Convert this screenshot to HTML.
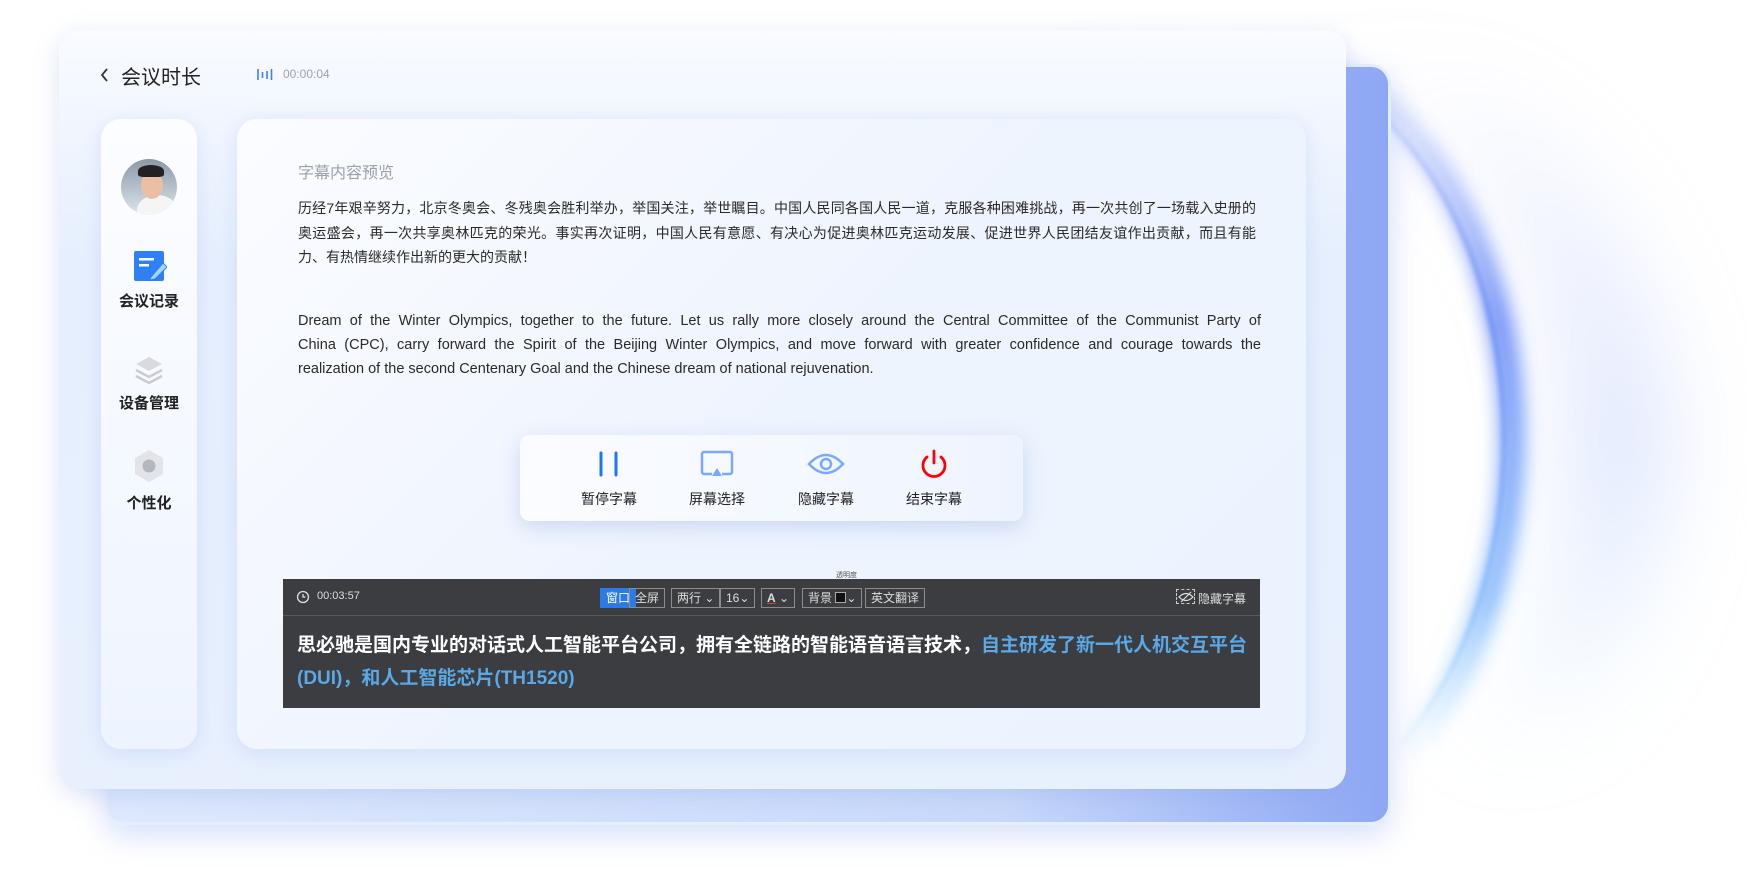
<!DOCTYPE html>
<html><head><meta charset="utf-8">
<style>
*{margin:0;padding:0;box-sizing:border-box}
body{width:1746px;height:873px;overflow:hidden;background:#fff;position:relative;font-family:"Liberation Sans","Noto Sans CJK SC",sans-serif;color:#222}
.abs{position:absolute}
#back{left:104px;top:64px;width:1287px;height:761px;border-radius:20px;background:linear-gradient(90deg,#dfe9fd 0%,#c9d9fb 70%,#8ea7f4 100%);border:3px solid #e4eeff;box-shadow:0 10px 30px rgba(120,150,240,.3)}
#main{left:59px;top:30px;width:1287px;height:759px;border-radius:20px;background:linear-gradient(180deg,#f9fbff 0%,#e6effe 30%,#e8f0fe 100%);box-shadow:0 6px 24px rgba(120,150,220,.25)}
#side{left:101px;top:119px;width:96px;height:630px;border-radius:20px;background:linear-gradient(180deg,#fcfdff,#eef4ff);box-shadow:0 4px 18px rgba(140,170,230,.25)}
#content{left:237px;top:119px;width:1069px;height:630px;border-radius:20px;background:linear-gradient(135deg,#fbfcff 0%,#eef4fe 50%,#ecf3fe 100%);box-shadow:0 4px 20px rgba(140,170,230,.25)}
.lbl{position:absolute;width:96px;text-align:center;font-size:15px;font-weight:bold;color:#222}
.jl{text-align:justify;text-align-last:justify;white-space:nowrap}
.cn{font-size:14px;color:#2a2a2a;height:24.5px;line-height:24.5px;width:958px}
.en{font-size:14.5px;color:#2a2a2a;height:24px;line-height:24px;width:963px}
#tool{left:520px;top:435px;width:503px;height:86px;border-radius:10px;background:linear-gradient(90deg,#fbfcff,#eef4ff);box-shadow:0 6px 20px rgba(120,150,220,.3)}
.ti{position:absolute;width:100px;text-align:center;font-size:14px;color:#222}
#sub{left:283px;top:579px;width:977px;height:129px;background:#3b3d40}
.tb{position:absolute;top:9px;height:20px;border:1px solid #8a8c90;color:#ddd;font-size:12px;line-height:18px;padding:0 5px}
</style></head><body>
<svg class="abs" style="left:0;top:0" width="1746" height="873">
<defs>
<filter id="b1" x="-50%" y="-50%" width="200%" height="200%"><feGaussianBlur stdDeviation="45"/></filter>
<filter id="b2" x="-50%" y="-50%" width="200%" height="200%"><feGaussianBlur stdDeviation="9"/></filter>
<filter id="b3" x="-50%" y="-50%" width="200%" height="200%"><feGaussianBlur stdDeviation="2.5"/></filter>
<linearGradient id="g" x1="0" y1="0" x2="0" y2="1"><stop offset="0" stop-color="#6e8ff5" stop-opacity="0"/><stop offset=".35" stop-color="#5f83f5"/><stop offset=".7" stop-color="#7fb6fb"/><stop offset=".9" stop-color="#8fd0fb" stop-opacity="0"/></linearGradient>
<linearGradient id="g2" x1="0" y1="0" x2="0" y2="1"><stop offset="0" stop-color="#b7c8fb" stop-opacity="0"/><stop offset=".5" stop-color="#c3d2fb"/><stop offset=".9" stop-color="#bfe3fd" stop-opacity="0"/></linearGradient>
</defs>
<ellipse cx="1290" cy="450" rx="330" ry="390" fill="none" stroke="url(#g2)" stroke-width="90" filter="url(#b1)" opacity=".6"/>
<ellipse cx="1232" cy="440" rx="280" ry="400" fill="none" stroke="url(#g)" stroke-width="26" filter="url(#b2)" opacity=".85"/>
<ellipse cx="1228" cy="440" rx="276" ry="390" fill="none" stroke="url(#g)" stroke-width="5" filter="url(#b3)" opacity=".7"/>
</svg>
<div id="back" class="abs"></div>
<div id="main" class="abs"></div>
<!-- header -->
<svg class="abs" style="left:99px;top:67px" width="12" height="16"><path d="M8 2 L3 8 L8 14" fill="none" stroke="#333" stroke-width="1.8"/></svg>
<div class="abs" style="left:121px;top:61px;font-size:20px;color:#222">会议时长</div>
<svg class="abs" style="left:257px;top:68px" width="18" height="13"><g stroke="#3d7ff5" stroke-width="1.6"><line x1="1" y1="1" x2="1" y2="12"/><line x1="5.5" y1="4" x2="5.5" y2="10"/><line x1="10" y1="3" x2="10" y2="11"/><line x1="14.5" y1="1" x2="14.5" y2="12"/></g></svg>
<div class="abs" style="left:283px;top:67px;font-size:12px;color:#9aa3b5">00:00:04</div>
<!-- sidebar -->
<div id="side" class="abs"></div>
<div class="abs" style="left:121px;top:159px;width:56px;height:56px;border-radius:50%;overflow:hidden;background:linear-gradient(180deg,#8a99a8,#dfe5ea)">
<div class="abs" style="left:16px;top:36px;width:40px;height:30px;border-radius:50%;background:#f5f5f5"></div>
<div class="abs" style="left:20px;top:12px;width:22px;height:28px;border-radius:50%;background:#eabfa3"></div>
<div class="abs" style="left:17px;top:6px;width:26px;height:12px;border-radius:50% 50% 20% 20%;background:#222"></div>
</div>
<svg class="abs" style="left:133px;top:249px" width="34" height="34"><rect x="1" y="2" width="30" height="30" rx="2" fill="#2f7ff6"/><rect x="6" y="9" width="15" height="2.5" fill="#fff"/><rect x="6" y="15" width="10" height="2.5" fill="#fff"/><path d="M18 28 L30 14 L34 18 L22 30 L17 31Z" fill="#a6d6fb" stroke="#2f7ff6" stroke-width="1"/></svg>
<div class="lbl" style="left:101px;top:290px">会议记录</div>
<svg class="abs" style="left:133px;top:354px" width="32" height="32"><path d="M16 3 L29 10 L16 17 L3 10Z" fill="#d9dae0"/><path d="M3 16 L16 23 L29 16" fill="none" stroke="#c9cad2" stroke-width="2.5"/><path d="M3 22 L16 29 L29 22" fill="none" stroke="#c9cad2" stroke-width="2.5"/></svg>
<div class="lbl" style="left:101px;top:392px">设备管理</div>
<svg class="abs" style="left:133px;top:449px" width="32" height="34"><path d="M16 1 L30 9 L30 25 L16 33 L2 25 L2 9Z" fill="#e3e4ea"/><circle cx="16" cy="17" r="6.5" fill="#b3b7c2"/></svg>
<div class="lbl" style="left:101px;top:492px">个性化</div>
<!-- content -->
<div id="content" class="abs"></div>
<div class="abs" style="left:298px;top:159px;font-size:16px;color:#9aa0ae">字幕内容预览</div>
<div class="abs" style="left:298px;top:196px">
<div class="jl cn">历经7年艰辛努力，北京冬奥会、冬残奥会胜利举办，举国关注，举世瞩目。中国人民同各国人民一道，克服各种困难挑战，再一次共创了一场载入史册的</div>
<div class="jl cn">奥运盛会，再一次共享奥林匹克的荣光。事实再次证明，中国人民有意愿、有决心为促进奥林匹克运动发展、促进世界人民团结友谊作出贡献，而且有能</div>
<div class="cn" style="white-space:nowrap">力、有热情继续作出新的更大的贡献！</div>
</div>
<div class="abs" style="left:298px;top:309px">
<div class="jl en">Dream of the Winter Olympics, together to the future. Let us rally more closely around the Central Committee of the Communist Party of</div>
<div class="jl en">China (CPC), carry forward the Spirit of the Beijing Winter Olympics, and move forward with greater confidence and courage towards the</div>
<div class="en" style="white-space:nowrap">realization of the second Centenary Goal and the Chinese dream of national rejuvenation.</div>
</div>
<!-- toolbar -->
<div id="tool" class="abs"></div>
<svg class="abs" style="left:596px;top:450px" width="26" height="28"><g stroke="#1677ff" stroke-width="3" stroke-linecap="round"><line x1="5" y1="3" x2="5" y2="25"/><line x1="20" y1="3" x2="20" y2="25"/></g></svg>
<svg class="abs" style="left:700px;top:450px" width="34" height="28"><path d="M12 24 H4 a2 2 0 0 1 -2-2 V4 a2 2 0 0 1 2-2 H30 a2 2 0 0 1 2 2 V22 a2 2 0 0 1 -2 2 H22" fill="none" stroke="#7aa9fb" stroke-width="2.5"/><path d="M17 18 L22 26 H12Z" fill="#7aa9fb"/></svg>
<svg class="abs" style="left:807px;top:451px" width="38" height="26"><path d="M2 13 Q19 -5 36 13 Q19 31 2 13Z" fill="none" stroke="#7aa9fb" stroke-width="2.5"/><circle cx="19" cy="13" r="5" fill="none" stroke="#7aa9fb" stroke-width="2.5"/></svg>
<svg class="abs" style="left:918px;top:448px" width="32" height="32"><path d="M9 9 A11 11 0 1 0 23 9" fill="none" stroke="#f00" stroke-width="2.8" stroke-linecap="round"/><line x1="16" y1="3" x2="16" y2="15" stroke="#f00" stroke-width="2.8" stroke-linecap="round"/></svg>
<div class="ti" style="left:559px;top:489px">暂停字幕</div>
<div class="ti" style="left:667px;top:489px">屏幕选择</div>
<div class="ti" style="left:776px;top:489px">隐藏字幕</div>
<div class="ti" style="left:884px;top:489px">结束字幕</div>
<!-- subtitle bar -->
<div class="abs" style="left:836px;top:570px;font-size:7px;color:#555">透明度</div>
<div id="sub" class="abs">
<div class="abs" style="left:0;top:36px;width:977px;height:1px;background:#56595e"></div>
<svg class="abs" style="left:13px;top:11px" width="14" height="14"><circle cx="7" cy="7" r="5.5" fill="none" stroke="#ddd" stroke-width="1.3"/><path d="M7 4 V7 H9.5" fill="none" stroke="#ddd" stroke-width="1.3"/></svg>
<div class="abs" style="left:34px;top:11px;font-size:11px;color:#ddd">00:03:57</div>
<div class="tb" style="left:317px;background:#2c7be5;border-color:#2c7be5;color:#fff">窗口</div>
<div class="tb" style="left:346px">全屏</div>
<div class="tb" style="left:388px">两行 ⌄</div>
<div class="tb" style="left:437px">16⌄</div>
<div class="tb" style="left:478px"><span style="text-decoration:underline;text-decoration-color:#e33;font-weight:bold">A</span> ⌄</div>
<div class="tb" style="left:519px">背景 <span style="display:inline-block;width:11px;height:11px;background:#111;border:1px solid #aaa;vertical-align:-1px"></span>⌄</div>
<div class="tb" style="left:582px">英文翻译</div>
<div class="abs" style="left:893px;top:10px;width:19px;height:15px;border:1px dashed #ccc"></div>
<svg class="abs" style="left:895px;top:12px" width="16" height="12"><path d="M1 6 Q8 -1 15 6 Q8 13 1 6Z" fill="none" stroke="#ddd" stroke-width="1.2"/><line x1="3" y1="11" x2="13" y2="1" stroke="#ddd" stroke-width="1.2"/></svg>
<div class="abs" style="left:915px;top:11px;font-size:12px;color:#ddd">隐藏字幕</div>
<div class="abs jl" style="left:14px;top:53px;width:948px;font-size:19px;font-weight:bold;color:#fff;line-height:28px">思必驰是国内专业的对话式人工智能平台公司，拥有全链路的智能语音语言技术，<span style="color:#5aa8e6">自主研发了新一代人机交互平台</span></div>
<div class="abs" style="left:14px;top:86px;font-size:19px;font-weight:bold;color:#5aa8e6;line-height:28px;white-space:nowrap">(DUI)，和人工智能芯片(TH1520)</div>
</div>
</body></html>
